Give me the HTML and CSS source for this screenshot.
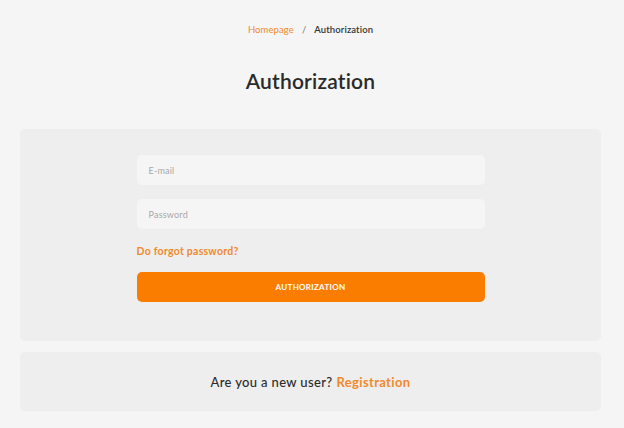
FILE: index.html
```html
<!DOCTYPE html>
<html>
<head>
<meta charset="utf-8">
<link rel="stylesheet" href="styles.css">
</head>
<body>
<div class="page">
  <nav class="crumbs"><a class="crumb-link" href="#">Homepage</a><span class="sep">/</span><span class="crumb-current">Authorization</span></nav>
  <h1 class="title">Authorization</h1>
  <div class="card login">
    <form class="form">
      <div class="field">E-mail</div>
      <div class="field">Password</div>
      <a class="forgot" href="#">Do forgot password?</a>
      <button class="btn" type="button">AUTHORIZATION</button>
    </form>
  </div>
  <div class="card register">
    <span class="q">Are you a new user?</span> <a class="reg" href="#">Registration</a>
  </div>
</div>
</body>
</html>
```
FILE: styles.css
```css
* { box-sizing: border-box; }
html, body { margin: 0; padding: 0; background: #f5f5f5; }
body { font-family: "Lato", "Noto Sans", sans-serif; color: #2b2b2b; }
.page { padding: 0 23px 0 20px; }
.crumbs { display: flex; justify-content: center; align-items: center; height: 58px; font-size: 9.5px; letter-spacing: 0.1px; }
.crumb-link { color: #f08a2c; text-decoration: none; }
.sep { color: #777; margin: 0 8px; }
.crumb-current { color: #333; font-weight: 600; }
.title { margin: 0; text-align: center; font-size: 21px; font-weight: 600; line-height: 26px; height: 71px; padding-top: 10px; color: #2a2a2a; letter-spacing: 0.2px; }
.card { background: #eeeeee; border-radius: 5px; }
.login { padding: 26px 0 39px; display: flex; justify-content: center; }
.form { width: 348px; display: flex; flex-direction: column; }
.field { height: 30px; background: #f5f5f5; border-radius: 5px; font-size: 9px; color: #a8a8a8; display: flex; align-items: center; padding-left: 12px; margin-bottom: 14px; letter-spacing: 0.2px; }
.forgot { color: #f08a2c; font-weight: 700; font-size: 10.5px; text-decoration: none; line-height: 16px; margin-bottom: 13px; letter-spacing: 0.25px; }
.btn { height: 30px; border: none; border-radius: 5px; background: #fa7d00; color: #fff; font-family: inherit; font-weight: 700; font-size: 8px; letter-spacing: 0.3px; }
.register { margin-top: 11px; height: 59px; display: flex; justify-content: center; align-items: center; font-size: 13px; letter-spacing: 0.35px; padding-top: 1px; }
.q { color: #2b2b2b; font-weight: 500; }
.reg { color: #f08a2c; font-weight: 700; text-decoration: none; margin-left: 4px; }
```
